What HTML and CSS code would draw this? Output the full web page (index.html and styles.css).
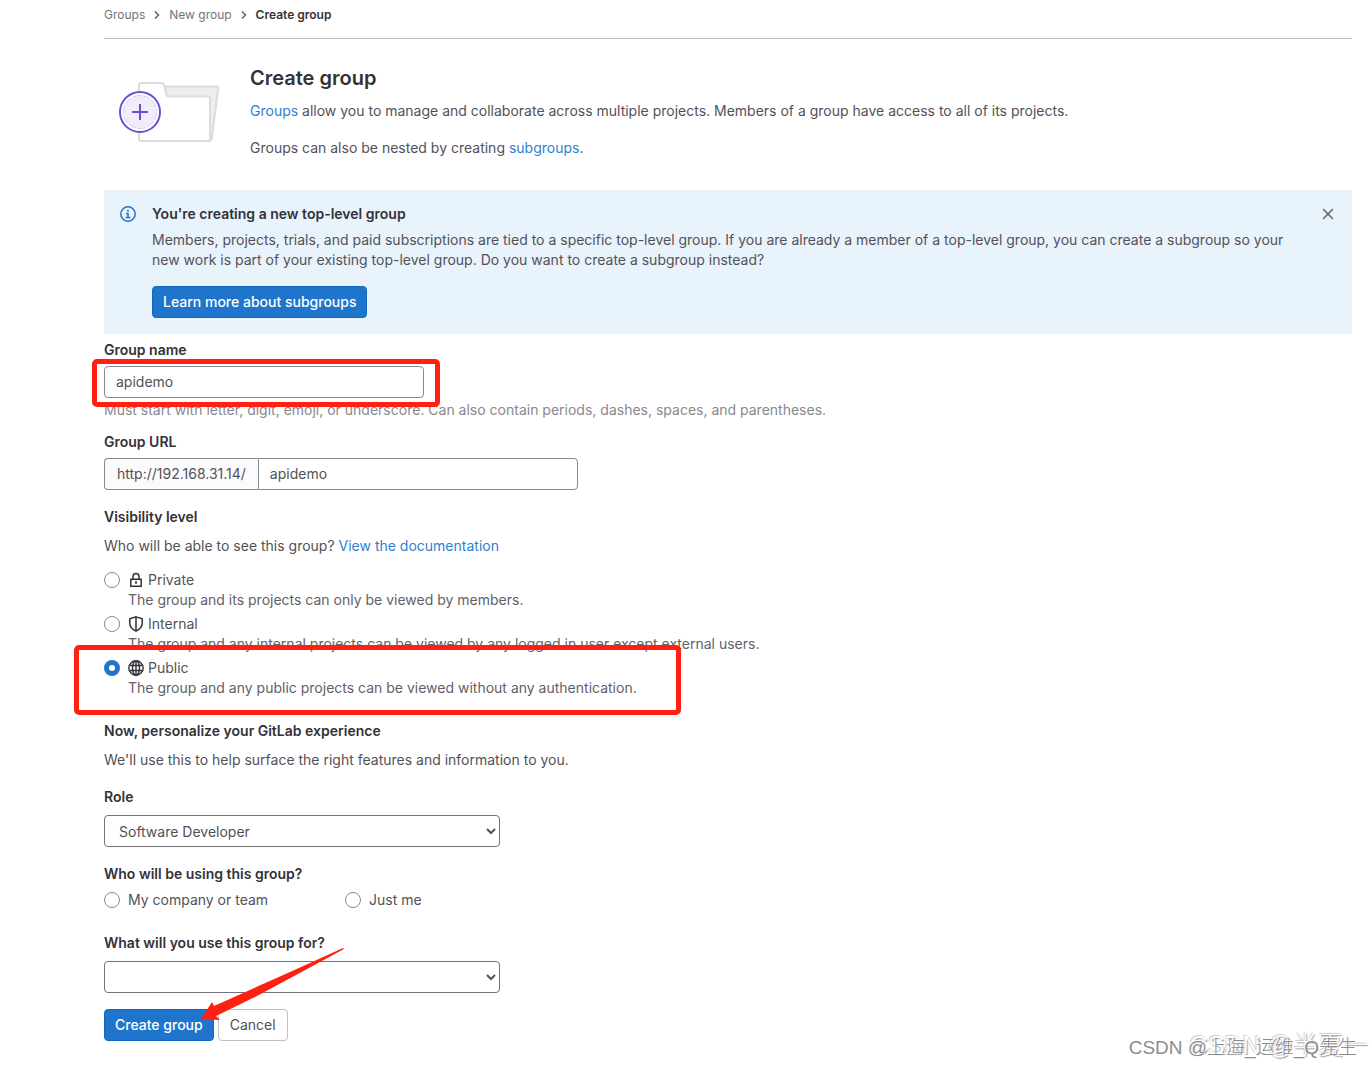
FILE: index.html
```html
<!DOCTYPE html>
<html lang="en">
<head>
  <meta charset="UTF-8">
  <meta name="viewport" content="width=device-width, initial-scale=1.0">
  <title>Create group</title>
  <link rel="stylesheet" href="styles.css">
</head>
<body>
  <div class="container">
    <nav class="breadcrumbs" aria-label="Breadcrumbs">
      <a href="#">Groups</a>
      <svg class="chevron" viewBox="0 0 8 8"><path d="M2 .5L5.500 4 2 7.500"/></svg>
      <a href="#">New group</a>
      <svg class="chevron" viewBox="0 0 8 8"><path d="M2 .5L5.500 4 2 7.500"/></svg>
      <a href="#" class="current">Create group</a>
    </nav>

    <header class="intro">
      <svg class="illustration" viewBox="0 0 104 64">
        <path d="M44 6.500h54.500q2 0 1.700 2l-6.500 50q-.3 2-2.500 2H44z" fill="#eee" stroke="#dcdcde" stroke-width="2"/>
        <path d="M21 59V5q0-2 2-2h20.500q2 0 2.500 2l2.500 9.500q.5 2 2.500 2h39q2 0 2 2V59q0 2-2 2H23q-2 0-2-2z" fill="#fff" stroke="#dcdcde" stroke-width="2"/>
        <circle cx="22" cy="32" r="20" fill="#fff" stroke="#6b4fd0" stroke-width="2"/>
        <circle cx="22" cy="32" r="16.500" fill="#f1ecfa" stroke="#d6cdf3" stroke-dasharray="8 2"/>
        <path d="M14 32h16M22 24v16" stroke="#6b4fd0" stroke-width="2"/>
      </svg>
      <div class="intro-text">
        <h1>Create group</h1>
        <p><a href="#">Groups</a> allow you to manage and collaborate across multiple projects. Members of a group have access to all of its projects.</p>
        <p>Groups can also be nested by creating <a href="#">subgroups</a>.</p>
      </div>
    </header>

    <section class="alert">
      <svg class="icon info" viewBox="0 0 16 16">
        <circle cx="8" cy="8" r="7.200" fill="none" stroke="currentColor" stroke-width="1.500"/>
        <path d="M6 7.500h2v4M5.700 11.500h4.600" fill="none" stroke="currentColor" stroke-width="1.500"/>
        <circle cx="8" cy="4.800" r="1" fill="currentColor"/>
      </svg>
      <div class="alert-body">
        <h2>You're creating a new top-level group</h2>
        <p>Members, projects, trials, and paid subscriptions are tied to a specific top-level group. If you are already a member of a top-level group, you can create a subgroup so your new work is part of your existing top-level group. Do you want to create a subgroup instead?</p>
        <button type="button" class="btn btn-confirm">Learn more about subgroups</button>
      </div>
      <button type="button" class="close" aria-label="Dismiss">
        <svg class="icon" viewBox="0 0 16 16"><path d="M3.500 3.500l9 9M12.500 3.500l-9 9" fill="none" stroke="currentColor" stroke-width="1.500" stroke-linecap="round"/></svg>
      </button>
    </section>

    <form class="group-form">
      <label class="label" for="group-name">Group name</label>
      <div class="field name-field">
        <input type="text" id="group-name" class="input" value="apidemo">
        <span class="mark mark-name"></span>
      </div>
      <p class="help">Must start with letter, digit, emoji, or underscore. Can also contain periods, dashes, spaces, and parentheses.</p>

      <label class="label" for="group-url">Group URL</label>
      <div class="field input-group">
        <span class="prefix">http://192.168.31.14/</span>
        <input type="text" id="group-url" class="input" value="apidemo">
      </div>

      <fieldset class="visibility">
        <legend class="label">Visibility level</legend>
        <p class="hint">Who will be able to see this group? <a href="#">View the documentation</a></p>
        <div class="option">
          <input type="radio" name="visibility" id="private">
          <label for="private">
            <span class="option-title">
              <svg class="icon" viewBox="0 0 16 16"><path d="M2.800 7.200h10.400v7H2.800zM5 7V4.500a3 3 0 0 1 6 0V7" fill="none" stroke="currentColor" stroke-width="1.500"/><path d="M8 9v3" stroke="currentColor" stroke-width="1.500"/></svg>
              Private
            </span>
            <span class="option-text">The group and its projects can only be viewed by members.</span>
          </label>
        </div>
        <div class="option">
          <input type="radio" name="visibility" id="internal">
          <label for="internal">
            <span class="option-title">
              <svg class="icon" viewBox="0 0 16 16"><path d="M8 .9l6.200 1.800v4.500c0 3.600-2.400 6-6.200 8-3.800-2-6.200-4.400-6.200-8V2.700zM8 1v14" fill="none" stroke="currentColor" stroke-width="1.500"/></svg>
              Internal
            </span>
            <span class="option-text">The group and any internal projects can be viewed by any logged in user except external users.</span>
          </label>
        </div>
        <div class="option">
          <input type="radio" name="visibility" id="public" checked>
          <label for="public">
            <span class="option-title">
              <svg class="icon" viewBox="0 0 16 16"><g fill="none" stroke="currentColor" stroke-width="1.400"><circle cx="8" cy="8" r="7.200"/><ellipse cx="8" cy="8" rx="3.500" ry="7.200"/><path d="M1.500 5.500h13M1.500 10.500h13M8 1v14"/></g></svg>
              Public
            </span>
            <span class="option-text">The group and any public projects can be viewed without any authentication.</span>
          </label>
          <span class="mark mark-public"></span>
        </div>
      </fieldset>

      <section class="personalize">
        <h2 class="label">Now, personalize your GitLab experience</h2>
        <p class="hint">We'll use this to help surface the right features and information to you.</p>
      </section>

      <label class="label" for="role">Role</label>
      <select id="role" class="select">
        <option>Software Developer</option>
      </select>

      <fieldset class="usage">
        <legend class="label">Who will be using this group?</legend>
        <div class="choices">
          <div class="option">
            <input type="radio" name="usage" id="company">
            <label for="company">My company or team</label>
          </div>
          <div class="option">
            <input type="radio" name="usage" id="just-me">
            <label for="just-me">Just me</label>
          </div>
        </div>
      </fieldset>

      <label class="label" for="purpose">What will you use this group for?</label>
      <select id="purpose" class="select">
        <option></option>
      </select>

      <div class="actions">
        <button type="submit" class="btn btn-confirm">Create group</button>
        <button type="button" class="btn">Cancel</button>
        <svg class="arrow" viewBox="0 0 144 74"><path d="M143 0L90 24 14 58l-2-4L1 71l19 1-4-4L57 48 96 27 144 1z" fill="#ff2012"/></svg>
      </div>
    </form>
  </div>
  <div class="watermark watermark-back">CSDN @半夏一</div>
  <div class="watermark">CSDN @上海_运维_Q先生</div>
</body>
</html>
```

FILE: styles.css
```css
* {
  box-sizing: border-box;
}
body {
  position: relative;
  margin: 0;
  padding: 0 20px 27px 104px;
  background: #fff;
  color: #535158;
  font-family: Inter, "Noto Sans", "Noto Sans CJK SC", sans-serif;
  font-size: 14px;
  line-height: 20px;
}
h1, h2, p {
  margin: 0;
}
a {
  color: #2f7fd0;
  text-decoration: none;
}
.breadcrumbs {
  display: flex;
  align-items: center;
  gap: 8px;
  padding: 7px 0 15px;
  border-bottom: 1px solid #bfbfc3;
  font-size: 12px;
  line-height: 16px;
}
.breadcrumbs a {
  color: #737278;
}
.breadcrumbs .current {
  color: #333238;
  font-weight: 600;
}
.chevron {
  width: 8px;
  height: 8px;
  fill: none;
  stroke: #626168;
  stroke-width: 1.5;
}
.intro {
  display: flex;
  padding: 27px 0 32px;
}
.illustration {
  flex: none;
  width: 104px;
  height: 64px;
  margin: 14px 28px 0 14px;
}
.intro h1 {
  margin-bottom: 11px;
  color: #333238;
  font-size: 20px;
  font-weight: 600;
  line-height: 24px;
}
.intro p + p {
  margin-top: 17px;
}
.icon {
  flex: none;
  width: 16px;
  height: 16px;
}
.alert {
  display: flex;
  padding: 16px;
  background: #e9f3fc;
}
.info {
  color: #1f75cb;
}
.alert-body {
  flex: 1;
  margin: 0 32px 0 16px;
}
.alert h2 {
  margin-bottom: 8px;
  color: #333238;
  font-size: 14px;
  font-weight: 600;
  line-height: 16px;
}
.alert p {
  margin-bottom: 16px;
}
.close {
  display: flex;
  align-self: flex-start;
  padding: 0;
  border: 0;
  background: none;
  color: #626168;
}
.btn {
  height: 32px;
  padding: 0 11px;
  border: 1px solid #bfbfc3;
  border-radius: 4px;
  background: #fff;
  color: #535158;
  font: inherit;
}
.btn-confirm {
  padding: 0 10px;
  border-color: #1068bf;
  background: #1f75cb;
  color: #fff;
  font-weight: 500;
}
.group-form {
  padding-top: 6px;
}
.label {
  display: block;
  padding: 0;
  color: #333238;
  font-size: 14px;
  font-weight: 600;
}
.field {
  position: relative;
  display: flex;
  margin-top: 6px;
}
.name-field {
  width: 320px;
}
.input {
  width: 320px;
  height: 32px;
  padding: 0 11px 2px;
  border: 1px solid #89888d;
  border-radius: 4px;
  background: #fff;
  color: #535158;
  font: inherit;
}
.help {
  margin: 2px 0 12px;
  color: #89888d;
}
.prefix {
  display: flex;
  align-items: center;
  padding: 0 12px;
  border: 1px solid #89888d;
  border-right: 0;
  border-radius: 4px 0 0 4px;
  background: #fbfafd;
}
.input-group .input {
  border-radius: 0 4px 4px 0;
}
fieldset {
  min-width: 0;
  margin: 17px 0 23px;
  padding: 0;
  border: 0;
}
.hint {
  margin-top: 9px;
}
.visibility .hint {
  margin-bottom: 14px;
}
.option {
  position: relative;
  display: flex;
  gap: 8px;
}
.option + .option {
  margin-top: 4px;
}
.option input {
  appearance: none;
  flex: none;
  width: 16px;
  height: 16px;
  margin: 2px 0;
  border: 1px solid #89888d;
  border-radius: 50%;
  background: #fff;
}
.option input:checked {
  border: 5px solid #1f75cb;
}
.option-title {
  display: flex;
  align-items: center;
  gap: 4px;
}
.option-title .icon {
  color: #333238;
}
.option-text {
  color: #626168;
}
.personalize {
  margin-bottom: 17px;
}
.select {
  display: block;
  width: 396px;
  height: 32px;
  margin-top: 8px;
  padding: 0 0 0 10px;
  border: 1px solid #737278;
  border-radius: 4px;
  background: #fff;
  color: #535158;
  font: inherit;
}
.choices {
  display: flex;
  margin-top: 6px;
}
.choices .option {
  width: 241px;
}
.choices .option + .option {
  margin-top: 0;
}
.actions {
  position: relative;
  display: flex;
  gap: 4px;
  margin-top: 16px;
}

/* red annotations */
.mark {
  position: absolute;
  border: 5px solid #ff2012;
  border-radius: 5px;
  pointer-events: none;
}
.mark-name {
  inset: -7px -16px -9px -12px;
}
.mark-public {
  top: -13px;
  left: -30px;
  width: 607px;
  height: 70px;
}
.arrow {
  position: absolute;
  top: -61px;
  left: 96px;
  width: 144px;
  height: 74px;
}

.watermark {
  position: absolute;
  right: 15px;
  bottom: 8px;
  color: #8c8c8c;
  font-family: "Liberation Sans", "Noto Sans CJK SC", sans-serif;
  font-size: 19px;
  font-weight: 300;
  line-height: 24px;
  white-space: nowrap;
  text-shadow: -1px -1px 0 #fff;
}
.watermark-back {
  right: 4px;
  bottom: 11px;
  color: #fff;
  font-size: 25px;
  text-shadow: 1px 1px 1px #999, -1px -1px 1px #ccc;
}
```
